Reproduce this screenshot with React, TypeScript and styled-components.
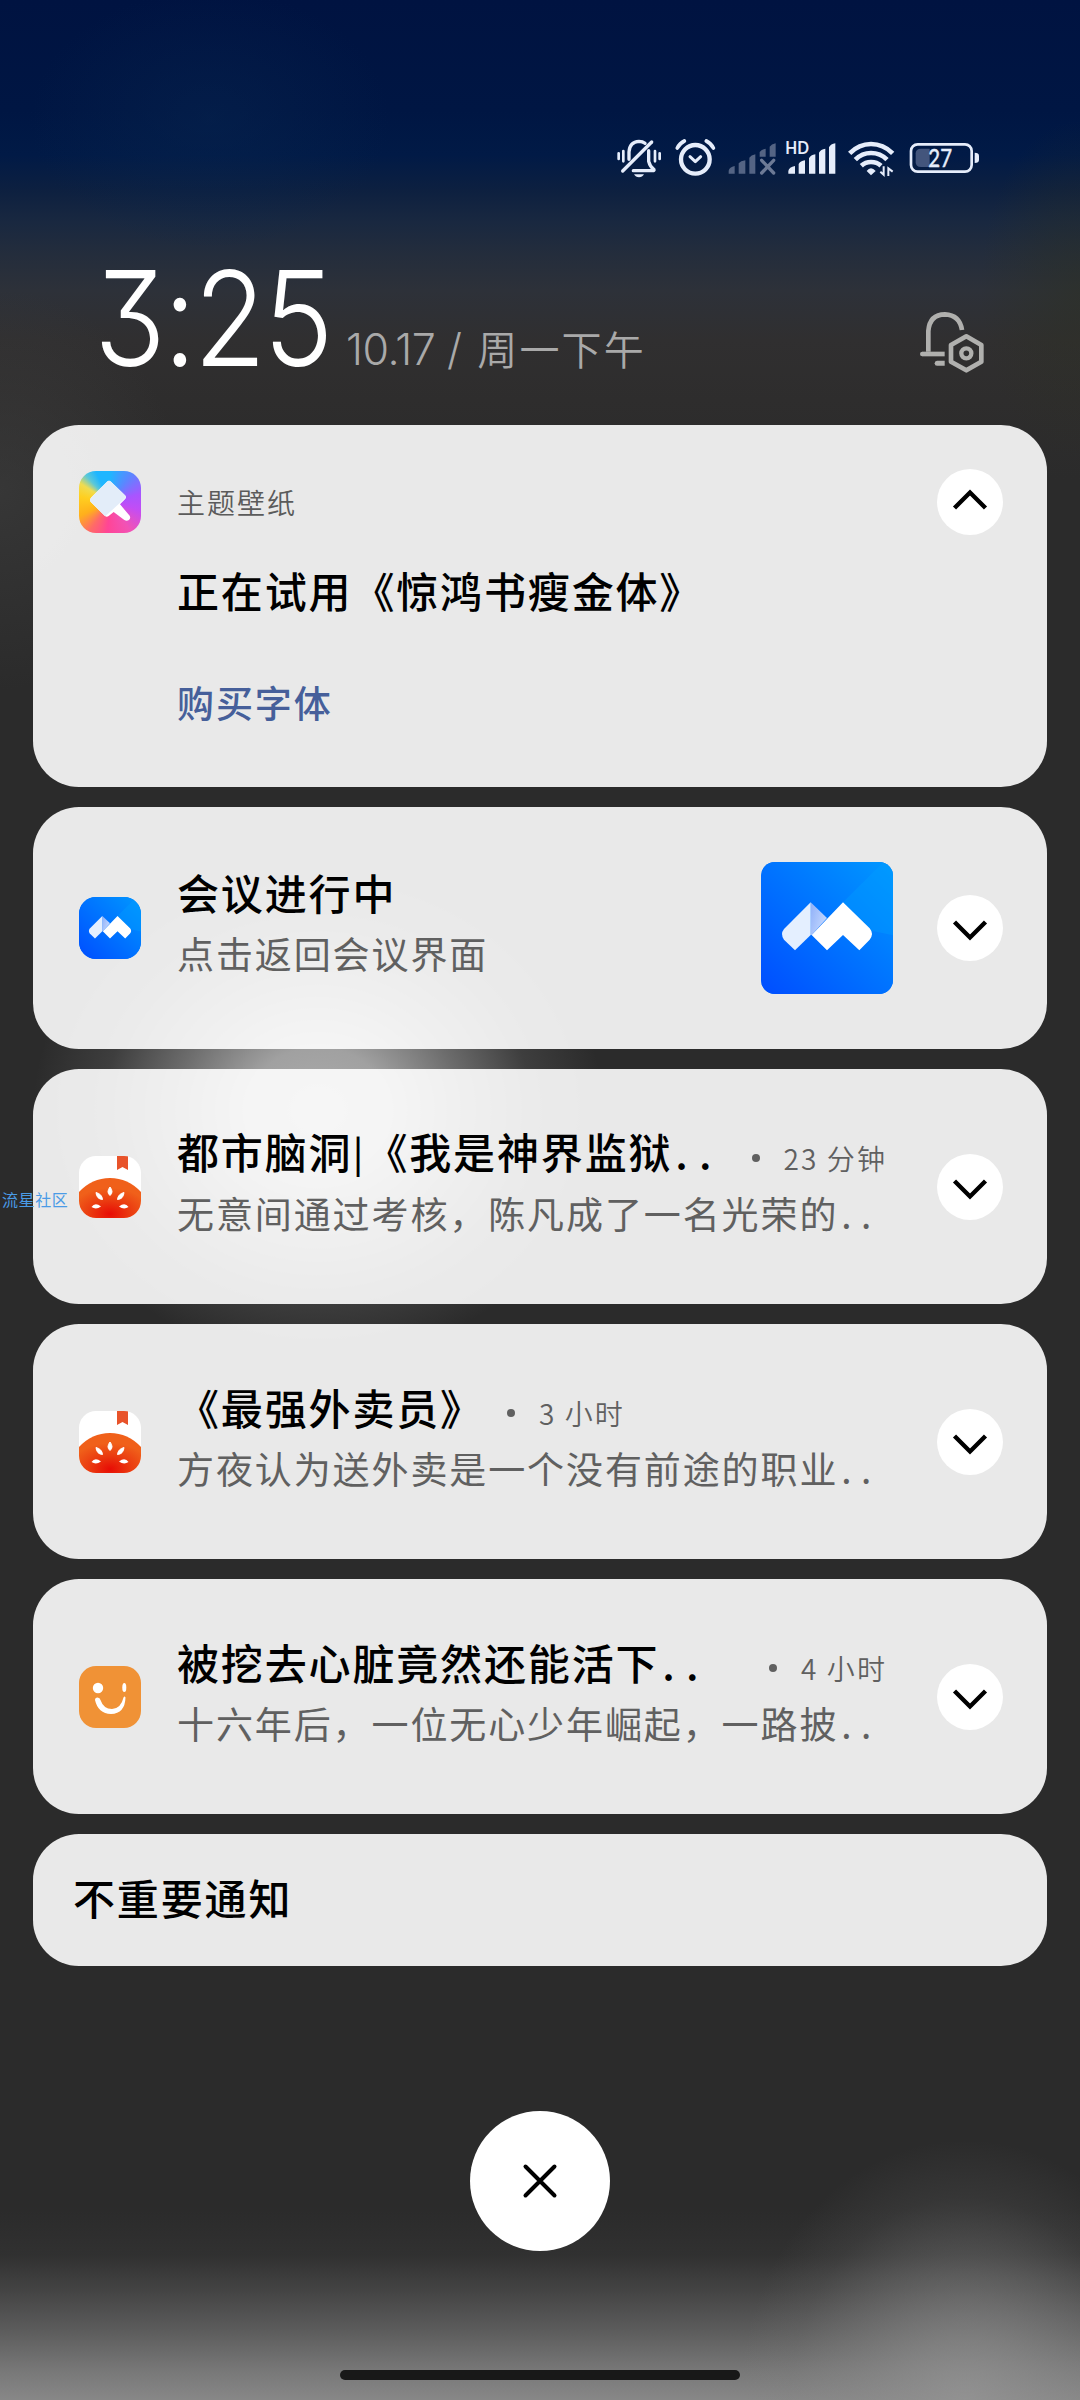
import React from "react";
import styled, { createGlobalStyle } from "styled-components";

const CJK = '"Noto Sans CJK SC", sans-serif';

const GlobalStyle = createGlobalStyle`
  body { margin: 0; background: #2b2b2b; }
  * { box-sizing: border-box; }
`;

const Screen = styled.div`
  position: relative;
  width: 1080px;
  height: 2400px;
  overflow: hidden;
  display: flex;
  flex-direction: column;
  font-family: ${CJK};
  background:
    radial-gradient(ellipse 225px 260px at 965px 2400px, rgba(150,150,150,.7) 0%, rgba(145,145,145,.58) 25%, rgba(140,140,140,.38) 50%, rgba(130,130,130,.13) 78%, rgba(120,120,120,0) 100%),
    linear-gradient(180deg, rgba(140,140,140,0) 2210px, rgba(140,140,140,.06) 2255px, rgba(140,140,140,.25) 2290px, rgba(140,140,140,.5) 2330px, rgba(140,140,140,.8) 2372px, rgba(140,140,140,.95) 2400px),
    radial-gradient(ellipse 285px 250px at 318px 1110px, rgba(190,190,190,.88) 0%, rgba(190,190,190,.8) 25%, rgba(180,180,180,.48) 50%, rgba(170,170,170,.15) 75%, rgba(160,160,160,0) 100%),
    radial-gradient(ellipse 100px 170px at 1080px 290px, rgba(45,48,34,.5), rgba(45,48,34,0)),
    radial-gradient(ellipse 180px 200px at 0px 490px, rgba(66,66,66,.5), rgba(60,60,60,0)),
    radial-gradient(ellipse 180px 130px at 210px 120px, rgba(8,38,80,.45), rgba(8,38,80,0)),
    linear-gradient(180deg, #001341 0, #001643 110px, #011a46 155px, #0d2040 190px, #192840 222px, #242d3c 255px, #2d3139 290px, #302f30 340px, #2e2d2d 400px, #2b2b2b 480px, #2b2b2b 2400px);
`;

const StatusBar = styled.div`
  display: flex;
  align-items: center;
  height: 42px;
  margin-top: 138px;
  padding-left: 616px;
`;

const StatusIcon = styled.svg<{ $w: number; $gap?: number }>`
  display: block;
  flex: none;
  width: ${(p) => p.$w}px;
  height: 42px;
  margin-left: ${(p) => p.$gap ?? 0}px;
`;

const Header = styled.header`
  display: flex;
  align-items: flex-end;
  height: 245px;
  padding: 0 95px 52px 94px;
`;

const Clock = styled.div`
  width: 252px;
  height: 119px;
  font: 280 132px/128px Inter, sans-serif;
  font-feature-settings: "cv09";
  letter-spacing: -3px;
  color: #fff;
  white-space: nowrap;
  transform: scaleX(0.895);
  transform-origin: 0 50%;
`;

const DateLine = styled.div`
  display: flex;
  align-items: baseline;
  flex: 1;
  height: 54px;
  color: #a9a9a9;
  white-space: nowrap;
`;

const DateDigits = styled.span`
  font: 300 43px/58px Inter, sans-serif;
  letter-spacing: -0.5px;
`;

const DateWords = styled.span`
  font: 350 40px/58px ${CJK};
  letter-spacing: 2.1px;
  margin-left: 16px;
`;

const BellSettings = styled.svg`
  display: block;
  width: 66px;
  height: 62px;
`;

const List = styled.main`
  display: flex;
  flex-direction: column;
  gap: 20px;
  padding: 0 33px;
`;

const Card = styled.section<{ $h: number }>`
  display: flex;
  align-items: center;
  height: ${(p) => p.$h}px;
  padding: 0 44px 0 46px;
  border-radius: 46px;
  background: rgba(254, 254, 254, 0.903);
`;

const TallCard = styled(Card)`
  flex-direction: column;
  align-items: stretch;
  padding-top: 44px;
`;

const PlainCard = styled(Card)`
  padding: 0 40px 6px;
`;

const TopRow = styled.div`
  display: flex;
  align-items: center;
  height: 66px;
`;

const TallBody = styled.div`
  display: flex;
  flex-direction: column;
  padding-left: 98px;
`;

const AppName = styled.div`
  flex: 1;
  margin-top: -1px;
  margin-left: 36px;
  font: 350 28px/40px ${CJK};
  letter-spacing: 2px;
  color: #5b5b5b;
`;

const Title = styled.div`
  display: flex;
  align-items: baseline;
  font: 500 42px/60px ${CJK};
  letter-spacing: 1.85px;
  color: #000;
  white-space: nowrap;
`;

const TallTitle = styled(Title)`
  margin-top: 25px;
`;

const Action = styled.div`
  margin-top: 54px;
  font: 500 37px/56px ${CJK};
  letter-spacing: 1.9px;
  color: #465f9a;
`;

const Body = styled.div<{ $lift: number }>`
  flex: 1;
  min-width: 0;
  margin-left: 36px;
  margin-top: ${(p) => -p.$lift}px;
`;

const TitleRow = styled.div`
  display: flex;
  align-items: center;
  width: 710px;
  height: 60px;
`;

const Bar = styled.span`
  position: relative;
  top: -2px;
  width: 13px;
  font-size: 36px;
  text-align: center;
`;

const Subtitle = styled.div`
  display: flex;
  font: 380 37px/62px ${CJK};
  letter-spacing: 1.9px;
  color: #606060;
  white-space: nowrap;
`;

const Dots = styled.span<{ $step: number }>`
  margin-left: 3px;
  letter-spacing: ${(p) => p.$step}px;
`;

const Stamp = styled.div<{ $push: boolean }>`
  display: flex;
  align-items: center;
  gap: 24px;
  margin-top: 12px;
  margin-left: ${(p) => (p.$push ? "auto" : "23px")};
  font: 350 28px/40px ${CJK};
  letter-spacing: 2.1px;
  color: #606060;
  white-space: nowrap;

  &::before {
    content: "";
    width: 8px;
    height: 8px;
    border-radius: 50%;
    background: #606060;
  }
`;

const AppTile = styled.div<{ $size?: number; $radius?: number; $bg: string }>`
  flex: none;
  width: ${(p) => p.$size ?? 62}px;
  height: ${(p) => p.$size ?? 62}px;
  border-radius: ${(p) => p.$radius ?? 17}px;
  overflow: hidden;
  background: ${(p) => p.$bg};

  svg { display: block; width: 100%; height: 100%; }
`;

const Thumb = styled.div`
  margin-right: 44px;
`;

const Toggle = styled.button`
  display: grid;
  place-items: center;
  flex: none;
  width: 66px;
  height: 66px;
  padding: 0;
  border: 0;
  border-radius: 50%;
  background: #fff;
`;

const Footer = styled.footer`
  display: flex;
  flex-direction: column;
  align-items: center;
  margin-top: 145px;
`;

const CloseButton = styled(Toggle)`
  width: 140px;
  height: 140px;
`;

const HomeBar = styled.div`
  width: 400px;
  height: 10px;
  margin-top: 119px;
  border-radius: 5px;
  background: #181818;
`;

const Watermark = styled.div`
  position: absolute;
  left: 2px;
  top: 1187px;
  font: 400 16px/24px ${CJK};
  letter-spacing: 0.6px;
  color: #4a9be6;
`;

const Chevron = ({ up = false }: { up?: boolean }) => (
  <Toggle>
    <svg width="40" height="28" viewBox="0 0 40 28" fill="none" stroke="#000" strokeWidth="4.4">
      <path d={up ? "M4.500 20 L20 4.500 L35.500 20" : "M4.500 8 L20 23.500 L35.500 8"} />
    </svg>
  </Toggle>
);

const MeetingLogo = ({ id }: { id: string }) => (
  <svg viewBox="0 0 396 396">
    <defs>
      <linearGradient id={id} x1="0" y1="1" x2="1" y2="0">
        <stop offset="0" stopColor="#004dff" />
        <stop offset="1" stopColor="#0098ff" />
      </linearGradient>
      <linearGradient id={id + "s"} x1="0" y1="0" x2="1" y2="0.6">
        <stop offset="0" stopColor="#8fb0f8" />
        <stop offset="1" stopColor="#c4d8ff" />
      </linearGradient>
    </defs>
    <rect width="396" height="396" fill={`url(#${id})`} />
    <path d="M246 121 L367 0 H396 V220 L332 206 Z" fill="#009dff" opacity=".4" />
    <path d="M149 121 L198 168 L152 219 H149 Z" fill={`url(#${id}s)`} />
    <path d="M149 121 L69 201 Q57 216 69 233 L102 265 L149 219 Z" fill="#e4efff" />
    <path d="M246 121 L326 199 Q340 216 326 233 L295 265 L246 219 L198 265 L152 219 Z" fill="#fff" />
  </svg>
);

const MeetingTile = ({ id, size, radius }: { id: string; size?: number; radius?: number }) => (
  <AppTile $bg="#0075ff" $size={size} $radius={radius}>
    <MeetingLogo id={id} />
  </AppTile>
);

const ThemeTile = () => (
  <AppTile $bg="conic-gradient(from 0deg, #1fb6ff 0deg, #5c86ff 38deg, #a855ff 75deg, #c24df5 105deg, #f252b4 145deg, #ff4596 185deg, #ff6a68 215deg, #ffb01c 245deg, #ffcf20 280deg, #f0dc50 302deg, #5cc8d8 318deg, #1fb6ff 335deg, #1fb6ff 360deg)">
    <svg viewBox="148 153 184 186">
      <path d="M231 185 Q237 179 243 185 L285 226 Q291 232 285 238 L270 253 L299 287 Q303 294 297 300 Q290 305 283 300 L251 276 L236 288 Q230 293 224 287 L183 247 Q177 240 183 233 Z" fill="#fff" />
      <path d="M231 185 Q237 179 243 185 L285 226 Q289 230 286 234 L229 286 Q227 289 224 287 L183 247 Q177 240 183 233 Z" fill="#e3edf9" />
    </svg>
  </AppTile>
);

const TomatoTile = ({ id }: { id: string }) => (
  <AppTile $bg="#fff">
    <svg viewBox="0 0 62 62">
      <defs>
        <radialGradient id={id} cx=".5" cy=".9" r=".65">
          <stop offset="0" stopColor="#e80c05" />
          <stop offset=".5" stopColor="#ea3a10" />
          <stop offset="1" stopColor="#f0601a" />
        </radialGradient>
      </defs>
      <path d="M0 36 Q13 22 31 22 Q49 22 62 36 V62 H0 Z" fill={`url(#${id})`} />
      <path d="M38 0 H49 V14 L43.5 11 L38 14 Z" fill="#e8532a" />
      <g fill="#fff">
        <path d="M31 31 Q35 36 31 39.5 Q27 36 31 31 Z" stroke="#fff" />
        <path d="M17 36.5 Q23 38 23.5 43.5 Q17.5 43 17 36.5 Z" stroke="#fff" />
        <path d="M45 36.5 Q39 38 38.5 43.5 Q44.5 43 45 36.5 Z" stroke="#fff" />
        <path d="M12.5 51 Q16 46 22 50.5 Q17 54 12.5 51 Z" />
        <path d="M49.5 51 Q46 46 40 50.5 Q45 54 49.5 51 Z" />
      </g>
    </svg>
  </AppTile>
);

const SmileTile = () => (
  <AppTile $bg="#f09236">
    <svg viewBox="0 0 62 62">
      <circle cx="19" cy="22" r="5.2" fill="#fff" />
      <ellipse cx="45.3" cy="21.5" rx="2" ry="4.6" fill="#fff" />
      <path d="M16 34 Q16 31.500 18.500 31.500 Q21 31.500 21.500 34 Q24.500 43 33 43 Q42 42.500 44.500 31.500 Q45.500 29.500 46.500 31.500 Q46 47.500 32 48 Q19 47.500 16 34 Z" fill="#fff" />
    </svg>
  </AppTile>
);

type Item = {
  id: string;
  icon: React.ReactNode;
  title: React.ReactNode;
  body: string;
  cut?: boolean;
  time: string;
};

const items: Item[] = [
  {
    id: "a",
    icon: <TomatoTile id="t1" />,
    title: <>都市脑洞<Bar>|</Bar>《我是神界监狱</>,
    cut: true,
    body: "无意间通过考核，陈凡成了一名光荣的",
    time: "23 分钟",
  },
  { id: "b", icon: <TomatoTile id="t2" />, title: "《最强外卖员》", body: "方夜认为送外卖是一个没有前途的职业", time: "3 小时" },
  { id: "c", icon: <SmileTile />, title: "被挖去心脏竟然还能活下", cut: true, body: "十六年后，一位无心少年崛起，一路披", time: "4 小时" },
];

const ink = "#e6edfb";

const StatusIcons = () => (
  <StatusBar>
    <StatusIcon $w={46} viewBox="48 54 138 126" fill="none" stroke={ink} strokeWidth="10" strokeLinecap="round" strokeLinejoin="round">
      <path d="M68 153 L155 66" />
      <path d="M87 118 V96 Q89 65 117 64 Q128 64 135 70" />
      <path d="M146 92 V124 Q150 140 162 149 Q163 152 158 152 H100" />
      <path d="M56 100 V117 M70 93 V124 M165 93 V124 M179 100 V117" strokeWidth="8" />
      <path d="M102 163 H132 Q127 172 117 172 Q107 172 102 163 Z" fill={ink} stroke="none" />
    </StatusIcon>
    <StatusIcon $w={41} $gap={13} viewBox="225 54 123 126" fill="none" stroke={ink} strokeLinecap="round" strokeLinejoin="round">
      <circle cx="286" cy="118" r="43" strokeWidth="13" />
      <path d="M270 110 L286 125 L302 110" strokeWidth="9" />
      <path d="M232 84 Q239 70 253 63 M340 84 Q333 70 319 63" strokeWidth="11" />
    </StatusIcon>
    <StatusIcon $w={48} $gap={12} viewBox="384 54 144 126" fill="#546484">
      <path d="M386 161 V152 Q388 141 404 138 V161 Z M416 161 V130 Q422 123 436 121 V161 Z M448 161 V113 Q453 105 466 103 V161 Z M479 110 V96 Q485 88 497 86 V110 Z M509 110 V80 Q514 72 527 70 V110 Z" />
      <path d="M485 121 L521 159 M521 121 L485 159" stroke="#6d7a96" strokeWidth="10" strokeLinecap="round" />
    </StatusIcon>
    <StatusIcon $w={52} $gap={9} viewBox="556 54 156 126" fill={ink}>
      <text x="557" y="102" fontFamily="Lato, sans-serif" fontWeight="700" fontSize="49" textLength="71" lengthAdjust="spacingAndGlyphs">HD</text>
      <path d="M566 161 V153 Q568 141 586 138 V161 Z M597 161 V132 Q602 123 616 121 V161 Z M628 161 V115 Q633 105 647 103 V161 Z M658 161 V98 Q663 88 677 86 V161 Z M688 161 V82 Q693 72 707 70 V161 Z" />
    </StatusIcon>
    <StatusIcon $w={47} $gap={11} viewBox="746 54 141 126" fill="none" stroke={ink} strokeWidth="14">
      <path d="M751 100 Q779 72 815 72 Q852 72 880 100" />
      <path d="M768 119 Q788 99 815 99 Q843 99 863 119" />
      <path d="M786 137 Q798 126 815 126 Q833 126 845 137" />
      <path d="M802 153 Q808 145 815 145 Q822 145 829 153 L815 166 Z" fill={ink} stroke="none" />
      <path d="M843 155 L853 164 V139 M867 168 V145 L880 155" strokeWidth="6" />
    </StatusIcon>
    <StatusIcon $w={70} $gap={14} viewBox="928 54 210 126">
      <rect x="934" y="73" width="182" height="82" rx="20" fill="none" stroke={ink} strokeWidth="8" />
      <path d="M964 86 H990 V141 H964 Q948 141 948 127 V100 Q948 86 964 86 Z" fill="#43557c" />
      <path d="M1125 98 Q1138 98 1138 107 V120 Q1138 129 1125 129 Z" fill={ink} />
      <text x="986" y="141" fontFamily="Lato, sans-serif" fontSize="73" fontWeight="400" fill={ink} stroke={ink} strokeWidth="1.500" textLength="71" lengthAdjust="spacingAndGlyphs">27</text>
    </StatusIcon>
  </StatusBar>
);

export default function App() {
  return (
    <>
      <GlobalStyle />
      <Screen>
        <StatusIcons />
        <Header>
          <Clock>3:25</Clock>
          <DateLine>
            <DateDigits>10.17 /</DateDigits>
            <DateWords>周一下午</DateWords>
          </DateLine>
          <BellSettings viewBox="118 64 198 186" fill="none" stroke="#b0b0ae" strokeWidth="14" strokeLinecap="round" strokeLinejoin="round">
            <path d="M146 186 V124 Q150 74 196 74 Q240 76 247 121" strokeLinecap="butt" />
            <path d="M195 193 H128" strokeLinecap="butt" />
            <circle cx="128" cy="193" r="7" fill="#b0b0ae" stroke="none" />
            <path d="M195 213 H172 Q165 213 165 220.500 Q165 228 172 228 H195 Z" fill="#b0b0ae" stroke="none" />
            <path d="M260 140 L305 166 V216 L260 242 L214 216 V166 Z" />
            <circle cx="260" cy="191" r="15" strokeWidth="13" />
          </BellSettings>
        </Header>

        <List>
          <TallCard $h={362}>
            <TopRow>
              <ThemeTile />
              <AppName>主题壁纸</AppName>
              <Chevron up />
            </TopRow>
            <TallBody>
              <TallTitle>正在试用《惊鸿书瘦金体》</TallTitle>
              <Action>购买字体</Action>
            </TallBody>
          </TallCard>

          <Card $h={242}>
            <MeetingTile id="m1" />
            <Body $lift={11}>
              <Title>会议进行中</Title>
              <Subtitle>点击返回会议界面</Subtitle>
            </Body>
            <Thumb>
              <MeetingTile id="m2" size={132} radius={14} />
            </Thumb>
            <Chevron />
          </Card>

          {items.map((item) => (
            <Card $h={235} key={item.id}>
              {item.icon}
              <Body $lift={8}>
                <TitleRow>
                  <Title>
                    {item.title}
                    {item.cut && <Dots $step={11}>..</Dots>}
                  </Title>
                  <Stamp $push={!!item.cut}>{item.time}</Stamp>
                </TitleRow>
                <Subtitle>
                  {item.body}
                  <Dots $step={9.5}>..</Dots>
                </Subtitle>
              </Body>
              <Chevron />
            </Card>
          ))}

          <PlainCard $h={132}>
            <Title>不重要通知</Title>
          </PlainCard>
        </List>

        <Footer>
          <CloseButton>
            <svg width="36" height="36" viewBox="0 0 36 36" stroke="#000" strokeWidth="4" strokeLinecap="round">
              <path d="M3.500 3.500 L32.500 32.500 M32.500 3.500 L3.500 32.500" />
            </svg>
          </CloseButton>
          <HomeBar />
        </Footer>

        <Watermark>流星社区</Watermark>
      </Screen>
    </>
  );
}
